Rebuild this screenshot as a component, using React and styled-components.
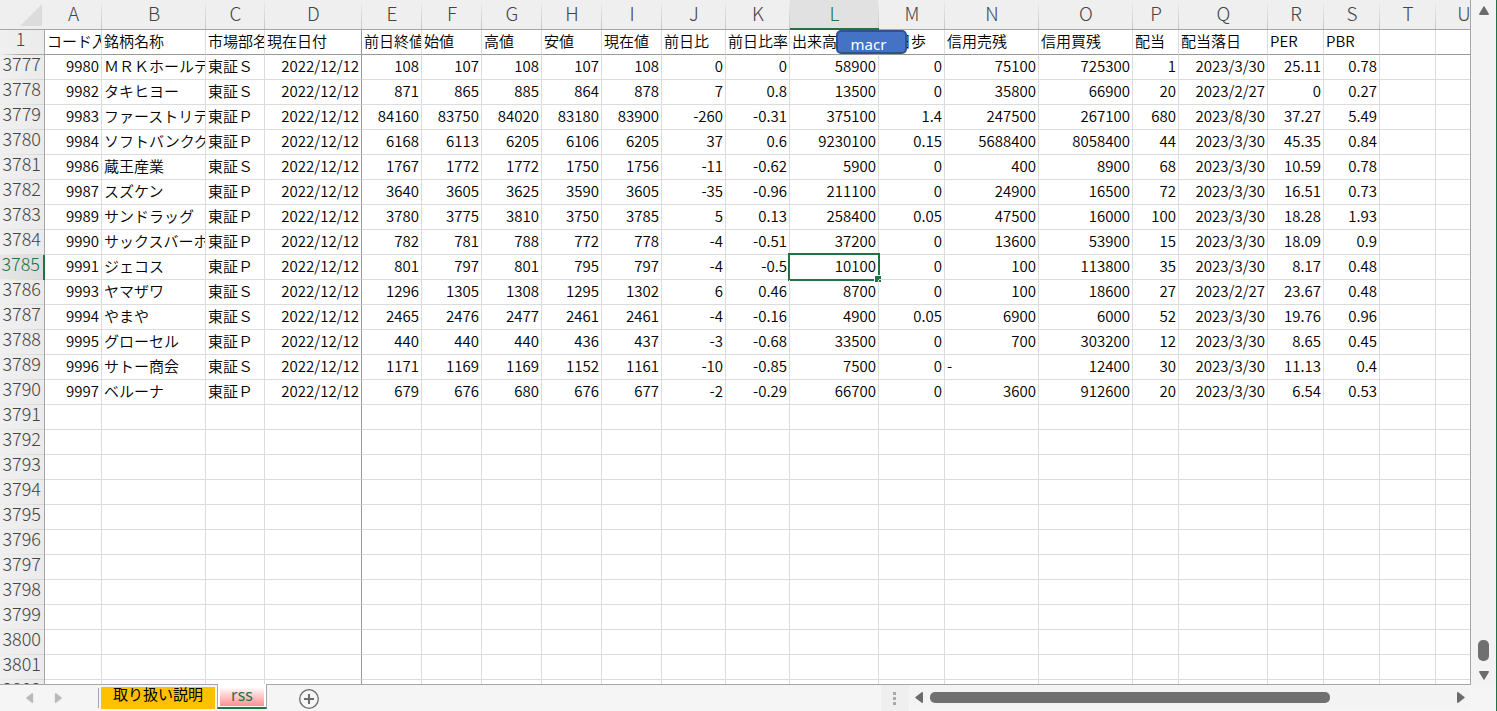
import React from "react";
import styled, { createGlobalStyle, css } from "styled-components";

const GlobalStyle = createGlobalStyle`
  * { box-sizing: border-box; }
  body {
    margin: 0;
    background: #f5f5f5;
    font-family: "Noto Sans CJK JP", "Noto Sans", sans-serif;
    color: #000;
    overflow: hidden;
  }
`;

const GREEN = "#217346";

const COLUMNS = [
  { id: "A", width: 57, title: "コード入" },
  { id: "B", width: 104, title: "銘柄名称", text: true },
  { id: "C", width: 59, title: "市場部名", text: true },
  { id: "D", width: 97, title: "現在日付" },
  { id: "E", width: 60, title: "前日終値" },
  { id: "F", width: 60, title: "始値" },
  { id: "G", width: 60, title: "高値" },
  { id: "H", width: 60, title: "安値" },
  { id: "I", width: 60, title: "現在値" },
  { id: "J", width: 64, title: "前日比" },
  { id: "K", width: 64, title: "前日比率" },
  { id: "L", width: 89, title: "出来高" },
  { id: "M", width: 66, title: "逆日歩" },
  { id: "N", width: 94, title: "信用売残" },
  { id: "O", width: 94, title: "信用買残" },
  { id: "P", width: 46, title: "配当" },
  { id: "Q", width: 89, title: "配当落日" },
  { id: "R", width: 56, title: "PER" },
  { id: "S", width: 56, title: "PBR" },
  { id: "T", width: 56, title: "" },
  { id: "U", width: 56, title: "" },
];

const HEAD_WIDTH = 45;
const FIRST_ROW = 3777;
const LAST_ROW = 3802;
const FROZEN_COLUMN = "D";
const ACTIVE = { row: 3785, column: "L" };
const TABLE_WIDTH = COLUMNS.reduce((sum, c) => sum + c.width, HEAD_WIDTH);

const D = "2022/12/12";
const DATA = [
  ["9980", "ＭＲＫホールデ", "東証Ｓ", D, "108", "107", "108", "107", "108", "0", "0", "58900", "0", "75100", "725300", "1", "2023/3/30", "25.11", "0.78"],
  ["9982", "タキヒヨー", "東証Ｓ", D, "871", "865", "885", "864", "878", "7", "0.8", "13500", "0", "35800", "66900", "20", "2023/2/27", "0", "0.27"],
  ["9983", "ファーストリテ", "東証Ｐ", D, "84160", "83750", "84020", "83180", "83900", "-260", "-0.31", "375100", "1.4", "247500", "267100", "680", "2023/8/30", "37.27", "5.49"],
  ["9984", "ソフトバンクグ", "東証Ｐ", D, "6168", "6113", "6205", "6106", "6205", "37", "0.6", "9230100", "0.15", "5688400", "8058400", "44", "2023/3/30", "45.35", "0.84"],
  ["9986", "蔵王産業", "東証Ｓ", D, "1767", "1772", "1772", "1750", "1756", "-11", "-0.62", "5900", "0", "400", "8900", "68", "2023/3/30", "10.59", "0.78"],
  ["9987", "スズケン", "東証Ｐ", D, "3640", "3605", "3625", "3590", "3605", "-35", "-0.96", "211100", "0", "24900", "16500", "72", "2023/3/30", "16.51", "0.73"],
  ["9989", "サンドラッグ", "東証Ｐ", D, "3780", "3775", "3810", "3750", "3785", "5", "0.13", "258400", "0.05", "47500", "16000", "100", "2023/3/30", "18.28", "1.93"],
  ["9990", "サックスバーホ", "東証Ｐ", D, "782", "781", "788", "772", "778", "-4", "-0.51", "37200", "0", "13600", "53900", "15", "2023/3/30", "18.09", "0.9"],
  ["9991", "ジェコス", "東証Ｐ", D, "801", "797", "801", "795", "797", "-4", "-0.5", "10100", "0", "100", "113800", "35", "2023/3/30", "8.17", "0.48"],
  ["9993", "ヤマザワ", "東証Ｓ", D, "1296", "1305", "1308", "1295", "1302", "6", "0.46", "8700", "0", "100", "18600", "27", "2023/2/27", "23.67", "0.48"],
  ["9994", "やまや", "東証Ｓ", D, "2465", "2476", "2477", "2461", "2461", "-4", "-0.16", "4900", "0.05", "6900", "6000", "52", "2023/3/30", "19.76", "0.96"],
  ["9995", "グローセル", "東証Ｐ", D, "440", "440", "440", "436", "437", "-3", "-0.68", "33500", "0", "700", "303200", "12", "2023/3/30", "8.65", "0.45"],
  ["9996", "サトー商会", "東証Ｓ", D, "1171", "1169", "1169", "1152", "1161", "-10", "-0.85", "7500", "0", "-", "12400", "30", "2023/3/30", "11.13", "0.4"],
  ["9997", "ベルーナ", "東証Ｐ", D, "679", "676", "680", "676", "677", "-2", "-0.29", "66700", "0", "3600", "912600", "20", "2023/3/30", "6.54", "0.53"],
];

const Window = styled.div`
  display: flex;
  flex-direction: column;
  height: 100vh;
  border-right: 1px solid ${GREEN};
`;

const Workspace = styled.main`
  display: flex;
  flex: 1;
  min-height: 0;
`;

const SheetPane = styled.div`
  flex: 1;
  min-width: 0;
  overflow: hidden;
  background: linear-gradient(#efefef 29px, #fff 29px);
  border-bottom: 1px solid #a6a6a6;
`;

const Table = styled.table`
  table-layout: fixed;
  width: ${TABLE_WIDTH}px;
  min-width: 100%;
  border-collapse: separate;
  border-spacing: 0;
`;

const Corner = styled.th`
  height: 30px;
  padding: 0 3px 3px 0;
  background: #efefef;
  border-bottom: 1px solid #a6a6a6;
  text-align: right;
  vertical-align: bottom;
  line-height: 0;
`;

const ColumnHead = styled.th`
  height: 30px;
  padding: 0;
  font-size: 19px;
  font-weight: 300;
  line-height: 25px;
  vertical-align: top;
  color: ${(p) => (p.$active ? GREEN : "#444")};
  background:
    linear-gradient(#efefef, #c6c6c6) right / 1px 100% no-repeat,
    ${(p) => (p.$active ? "#e1e1e1" : "#efefef")};
  border-bottom: ${(p) => (p.$active ? `2px solid ${GREEN}` : "1px solid #a6a6a6")};
`;

const RowHead = styled.th`
  height: 25px;
  padding: 0 3px 9px 0;
  font-size: 18px;
  font-weight: 300;
  line-height: 16px;
  text-align: ${(p) => (p.$frozen ? "center" : "right")};
  color: ${(p) => (p.$active ? GREEN : "#444")};
  background:
    linear-gradient(90deg, #efefef, ${(p) => (p.$frozen ? "#a6a6a6, #a6a6a6" : "#d4d4d4")}) bottom / 100% 1px no-repeat,
    ${(p) => (p.$active ? "linear-gradient(90deg, #e6e6e6, #dcdcdc)" : "linear-gradient(90deg, #f0f0f0, #ebebeb)")};
  border-right: ${(p) => (p.$active ? `2px solid ${GREEN}` : "1px solid #a6a6a6")};
`;

const Cell = styled.td`
  position: relative;
  height: 25px;
  padding: 0 2px 2px;
  overflow: hidden;
  font-size: 15px;
  font-weight: 350;
  line-height: 22px;
  white-space: nowrap;
  text-align: ${(p) => (p.$text ? "left" : "right")};
  border-right: 1px solid ${(p) => (p.$frozenEdge ? "#999" : "#dcdcdc")};
  border-bottom: 1px solid ${(p) => (p.$title ? "#999" : "#dcdcdc")};
  ${(p) =>
    p.$active &&
    css`
      overflow: visible;
    `}
`;

const Selection = styled.div`
  position: absolute;
  inset: -2px;
  border: 2px solid ${GREEN};

  &::after {
    content: "";
    position: absolute;
    right: -3px;
    bottom: -3px;
    width: 6px;
    height: 6px;
    background: ${GREEN};
    border-top: 1px solid #fff;
    border-left: 1px solid #fff;
  }
`;

const TitleCell = styled(Cell)`
  overflow: ${(p) => (p.$hostsButton ? "visible" : "hidden")};
`;

const MacroButton = styled.button`
  position: absolute;
  z-index: 1;
  top: 0;
  left: 46px;
  width: 71px;
  height: 24px;
  padding: 5px 6px 0 0;
  overflow: hidden;
  font-family: "Noto Sans", sans-serif;
  font-size: 15px;
  line-height: 15px;
  color: #fff;
  background: #4472c4;
  border: 2px solid #2f528f;
  border-radius: 5px;
`;

const VerticalBar = styled.div`
  display: flex;
  flex-direction: column;
  align-items: center;
  width: 26px;
  padding: 6px 0 5px;
  background: #f3f3f3;
  border-left: 1px solid #a6a6a6;
`;

const VerticalTrack = styled.div`
  display: flex;
  flex: 1;
  flex-direction: column;
  justify-content: flex-end;
  padding-bottom: 10px;
`;

const VerticalThumb = styled.div`
  width: 11px;
  height: 21px;
  background: #707070;
  border-radius: 5px;
`;

const IconButton = styled.button`
  display: flex;
  align-items: center;
  justify-content: center;
  flex: none;
  padding: 0;
  background: none;
  border: 0;
  color: ${(p) => p.$tone || "#6b6b6b"};
`;

const BottomBar = styled.footer`
  display: flex;
  flex: none;
  height: 26px;
  background: #f5f5f5;
`;

const SheetNav = styled.div`
  display: flex;
  align-items: center;
  gap: 20px;
  width: 98px;
  padding-left: 26px;
`;

const Tabs = styled.nav`
  display: flex;
  align-items: flex-start;
  gap: 2px;
  padding-left: 3px;
  background: linear-gradient(#a6a6a6, #a6a6a6) left 3px / 1px 20px no-repeat;
`;

const SheetTab = styled.button`
  width: 114px;
  height: 22px;
  margin-top: 2px;
  padding: 0 0 8px;
  font-family: inherit;
  font-size: 15px;
  line-height: 14px;
  color: #000;
  background: #ffc000;
  border: 0;
`;

const ActiveTab = styled.button`
  width: 50px;
  height: 25px;
  margin-top: -1px;
  padding: 3px 2px 1px;
  background: #fff;
  border: 1px solid #a6a6a6;
  border-top: 0;
  border-bottom: 2px solid ${GREEN};
`;

const ActiveTabLabel = styled.span`
  display: block;
  height: 19px;
  font-family: "Noto Sans", sans-serif;
  font-size: 16px;
  line-height: 16px;
  color: ${GREEN};
  background: linear-gradient(#fff, #ff8f8f);
`;

const AddSheet = styled(IconButton)`
  margin: 3px 0 0 31px;
  height: 22px;
`;

const Spacer = styled.div`
  flex: 1;
`;

const SplitHandle = styled.div`
  display: flex;
  flex-direction: column;
  align-items: center;
  gap: 2px;
  width: 28px;
  padding-top: 7px;
  background: #efefef;
`;

const Dot = styled.i`
  width: 3px;
  height: 3px;
  background: #a9a9a9;
`;

const HorizontalBar = styled.div`
  display: flex;
  align-items: center;
  gap: 6px;
  width: calc(38% - 6px);
  height: 22px;
  margin: 1px 25px 0 0;
  padding: 0 6px;
  background: #f3f3f3;
  border-radius: 8px;
`;

const HorizontalTrack = styled.div`
  flex: 1;
`;

const HorizontalThumb = styled.div`
  width: 77%;
  height: 11px;
  background: #707070;
  border-radius: 5px;
`;

const SHAPES = {
  up: "M5.5 0.5 Q6 0 6.5 0.5 L11 8 Q11 9 10 9 L2 9 Q1 9 1 8 Z",
  down: "M1 1 Q1 0 2 0 L10 0 Q11 0 11 1 L6.5 8.5 Q6 9 5.5 8.5 Z",
  left: "M8 1 L8 10 Q8 11 7 11 L0.5 6 Q0 5.5 0.5 5 L7 0 Q8 0 8 1 Z",
  right: "M1 1 L1 10 Q1 11 2 11 L8.5 6 Q9 5.5 8.5 5 L2 0 Q1 0 1 1 Z",
};

function Arrow({ shape, small }) {
  const flat = shape === "up" || shape === "down";
  const w = flat ? 12 : 9;
  const h = flat ? 9 : 11;
  return (
    <svg
      width={small ? 8 : w}
      height={small ? 10 : h}
      viewBox={`0 0 ${w} ${h}`}
      fill="currentColor"
      aria-hidden="true"
    >
      <path d={SHAPES[shape]} />
    </svg>
  );
}

function Row({ number, values }) {
  return (
    <tr>
      <RowHead scope="row" $active={number === ACTIVE.row}>
        {number}
      </RowHead>
      {COLUMNS.map((column, i) => {
        const value = values ? values[i] : "";
        const active = number === ACTIVE.row && column.id === ACTIVE.column;
        return (
          <Cell
            key={column.id}
            $text={column.text || value === "-"}
            $frozenEdge={column.id === FROZEN_COLUMN}
            $active={active}
          >
            {value}
            {active && <Selection />}
          </Cell>
        );
      })}
    </tr>
  );
}

export default function App() {
  const rows = [];
  for (let n = FIRST_ROW; n <= LAST_ROW; n += 1) {
    rows.push(<Row key={n} number={n} values={DATA[n - FIRST_ROW]} />);
  }

  return (
    <Window>
      <GlobalStyle />
      <Workspace>
        <SheetPane>
          <Table>
            <colgroup>
              <col style={{ width: HEAD_WIDTH }} />
              {COLUMNS.map((c) => (
                <col key={c.id} style={{ width: c.width }} />
              ))}
            </colgroup>
            <thead>
              <tr>
                <Corner>
                  <svg width="22" height="22" viewBox="0 0 22 22" aria-hidden="true">
                    <path d="M22 0V22H0Z" fill="#dcdcdc" />
                  </svg>
                </Corner>
                {COLUMNS.map((c) => (
                  <ColumnHead key={c.id} scope="col" $active={c.id === ACTIVE.column}>
                    {c.id}
                  </ColumnHead>
                ))}
              </tr>
            </thead>
            <tbody>
              <tr>
                <RowHead scope="row" $frozen>
                  1
                </RowHead>
                {COLUMNS.map((c) => (
                  <TitleCell
                    key={c.id}
                    $text
                    $title
                    $frozenEdge={c.id === FROZEN_COLUMN}
                    $hostsButton={c.id === ACTIVE.column}
                  >
                    {c.title}
                    {c.id === ACTIVE.column && <MacroButton type="button">macr</MacroButton>}
                  </TitleCell>
                ))}
              </tr>
              {rows}
            </tbody>
          </Table>
        </SheetPane>
        <VerticalBar>
          <IconButton type="button" aria-label="Scroll up">
            <Arrow shape="up" />
          </IconButton>
          <VerticalTrack>
            <VerticalThumb />
          </VerticalTrack>
          <IconButton type="button" aria-label="Scroll down">
            <Arrow shape="down" />
          </IconButton>
        </VerticalBar>
      </Workspace>
      <BottomBar>
        <SheetNav>
          <IconButton type="button" aria-label="Previous sheet" $tone="#b9b9b9">
            <Arrow shape="left" small />
          </IconButton>
          <IconButton type="button" aria-label="Next sheet" $tone="#b9b9b9">
            <Arrow shape="right" small />
          </IconButton>
        </SheetNav>
        <Tabs>
          <SheetTab type="button">取り扱い説明</SheetTab>
          <ActiveTab type="button">
            <ActiveTabLabel>rss</ActiveTabLabel>
          </ActiveTab>
        </Tabs>
        <AddSheet type="button" aria-label="New sheet">
          <svg width="22" height="22" viewBox="0 0 22 22" fill="none" stroke="#6b6b6b" aria-hidden="true">
            <circle cx="11" cy="11" r="9.3" strokeWidth="1.3" />
            <path d="M11 6V16M6 11H16" strokeWidth="2" />
          </svg>
        </AddSheet>
        <Spacer />
        <SplitHandle>
          <Dot />
          <Dot />
          <Dot />
        </SplitHandle>
        <HorizontalBar>
          <IconButton type="button" aria-label="Scroll left">
            <Arrow shape="left" />
          </IconButton>
          <HorizontalTrack>
            <HorizontalThumb />
          </HorizontalTrack>
          <IconButton type="button" aria-label="Scroll right">
            <Arrow shape="right" />
          </IconButton>
        </HorizontalBar>
      </BottomBar>
    </Window>
  );
}
